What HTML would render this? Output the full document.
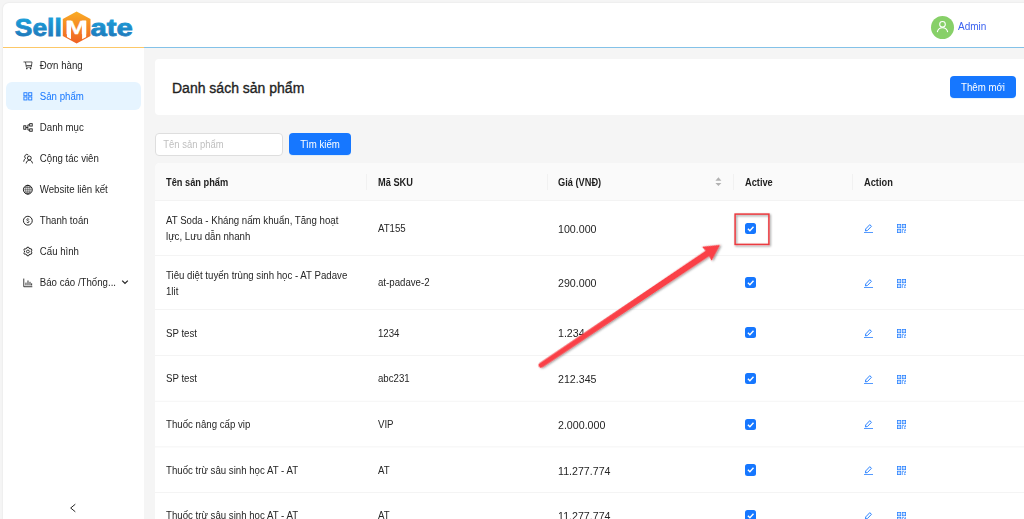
<!DOCTYPE html>
<html lang="vi">
<head>
<meta charset="utf-8">
<title>SellMate - Danh sách sản phẩm</title>
<style>
*{box-sizing:border-box;margin:0;padding:0}
html,body{width:1024px;height:519px;overflow:hidden;background:#f5f5f5;font-family:"Liberation Sans",sans-serif;font-size:9.67px;color:#262626}
.abs{position:absolute}
#page{position:absolute;left:3px;top:3px;width:1030px;height:530px;background:#f5f5f5;border-top-left-radius:6px;overflow:hidden;box-shadow:0 0 2px rgba(0,0,0,.10)}
#header{position:absolute;left:0;top:0;width:1030px;height:44px;background:#fff}
#hl1{position:absolute;left:0;top:43.6px;width:141px;height:1.2px;background:#fcc868}
#hl2{position:absolute;left:141px;top:43.6px;width:900px;height:1.2px;background:#84c2e8}
#sider{position:absolute;left:0;top:45px;width:141px;height:480px;background:#fff}
.mi{position:absolute;left:3px;width:135px;height:28px;border-radius:6px;line-height:28px;white-space:nowrap}
.mi span{position:absolute;left:33.800px;top:0}
.mi svg{position:absolute;left:16.500px;top:9.500px;width:9.600px;height:9.600px;overflow:visible}
.mi.sel{background:#e6f4ff;color:#1677ff}
#avatar{position:absolute;left:928px;top:12.600px;width:23px;height:23px;border-radius:50%;background:#87d068}
#admin{position:absolute;left:955px;top:17.800px;line-height:12px;color:#3b62f0;font-size:10px}
#titlecard{position:absolute;left:152px;top:56px;width:900px;height:56px;background:#fff;border-radius:4px}
#title{position:absolute;left:17px;top:20px;font-size:14px;line-height:18px;color:#1f1f1f;-webkit-text-stroke:.35px #1f1f1f;white-space:nowrap}
.btn{position:absolute;background:#1677ff;color:#fff;border-radius:4px;text-align:center;white-space:nowrap;box-shadow:0 1px 0 rgba(5,145,255,.1)}
#add{left:795px;top:16.800px;width:66px;height:22.300px;line-height:23.800px}
#search{left:286px;top:130.200px;width:62px;height:22.300px;line-height:23.800px}
#input{position:absolute;left:152px;top:130px;width:128px;height:22.5px;border:1px solid #dedede;border-radius:4px;background:#fff;color:#bfbfbf;line-height:22px;padding-left:7.300px;font-size:9.450px;white-space:nowrap}
#table{position:absolute;left:152px;top:160px;width:900px;height:400px;background:#fff;border-top-left-radius:5px;overflow:hidden}
#thead{position:absolute;left:0;top:0;width:900px;height:38px;background:#fafafa;border-bottom:1px solid #f3f3f3}
.th{position:absolute;top:.8px;height:38.5px;line-height:38.5px;font-weight:bold;font-size:9.25px;color:#1f1f1f;white-space:nowrap}
.sep{position:absolute;top:11px;width:1px;height:16px;background:#f1f1f1}
.row{position:absolute;left:0;width:900px}
.ln{position:absolute;left:0;width:900px;height:1px}
.c{position:absolute;white-space:nowrap;line-height:15.5px}
.c1{left:11px}.c2{left:223px}.c3{left:403px;font-size:10.65px}
.cb{position:absolute;left:590px;width:11.3px;height:11.3px;border-radius:2.5px;background:#1677ff}
.cb svg{position:absolute;left:0;top:0;width:11.3px;height:11.3px}
.ic{position:absolute;width:9px;height:9px}
.mi span,.c,.th,#admin,.btn span,#input span{transform:scaleY(1.08);transform-origin:50% 72%}
.btn span,#input span{display:inline-block}
</style>
</head>
<body>
<div id="page">
  <div id="header">
    <svg class="abs" style="left:0;top:0" width="150" height="44" viewBox="3 3 150 44">
      <defs>
        <linearGradient id="gb" x1="0" y1="14" x2="0" y2="38" gradientUnits="userSpaceOnUse"><stop offset="0" stop-color="#1ba7e0"/><stop offset="1" stop-color="#1e78ba"/></linearGradient>
        <linearGradient id="go" x1="0" y1="11" x2="0" y2="44" gradientUnits="userSpaceOnUse"><stop offset="0" stop-color="#faae25"/><stop offset="1" stop-color="#ef5f24"/></linearGradient>
        <clipPath id="hx"><polygon points="62.900,0 90.400,0 90.400,34.800 76.600,42.200 62.900,34.800"/></clipPath>
      </defs>
      <text x="14.800" y="35.800" font-family="Liberation Sans, sans-serif" font-weight="bold" font-size="24.600" fill="url(#gb)" stroke="url(#gb)" stroke-width=".8" textLength="47" lengthAdjust="spacingAndGlyphs">Sell</text>
      <polygon points="76.600,11.500 90.500,18.900 90.500,36.100 76.600,43.600 62.800,36.100 62.800,18.900" fill="url(#go)"/>
      <g clip-path="url(#hx)" fill="#fff"><text transform="translate(76.550 33.800) scale(1.400 1)" x="0" y="0" text-anchor="middle" font-family="Liberation Sans, sans-serif" font-weight="bold" font-size="19.200" stroke="#fff" stroke-width=".25">M</text><rect x="66.900" y="20.600" width="4.100" height="22"/><rect x="82.100" y="20.600" width="4.100" height="22"/></g>
      <text x="90.400" y="35.800" font-family="Liberation Sans, sans-serif" font-weight="bold" font-size="24.600" fill="url(#gb)" stroke="url(#gb)" stroke-width=".8" textLength="42.300" lengthAdjust="spacingAndGlyphs">ate</text>
    </svg>
    <div id="avatar">
      <svg class="abs" style="left:5px;top:4.500px" width="13" height="13" viewBox="0 0 12 12" fill="none" stroke="#fff" stroke-width="1"><circle cx="6" cy="4" r="2.6"/><path d="M1.2 11.2c.5-2.6 2.4-4 4.8-4s4.3 1.4 4.8 4"/></svg>
    </div>
    <div id="admin">Admin</div>
  </div>
  <div id="hl1"></div><div id="hl2"></div>

  <div id="sider">
    <div class="mi" style="top:3.00px"><svg viewBox="0 0 10 10" fill="none" stroke="#262626" stroke-width=".8"><path d="M.5 1h2.100l.9 5.400h5.100l.8-5.400H2.600M3.300 4.700h5.700"/><circle cx="4" cy="7.900" r=".85" fill="#262626" stroke="none"/><circle cx="7.900" cy="7.900" r=".85" fill="#262626" stroke="none"/></svg><span style="top:0.90px">Đơn hàng</span></div>
    <div class="mi sel" style="top:34.07px"><svg viewBox="0 0 10 10" fill="none" stroke="#1c79ff" stroke-width=".95"><rect x=".95" y=".75" width="3.200" height="3.150"/><rect x="5.950" y=".75" width="3.200" height="3.150"/><rect x=".95" y="5.150" width="3.200" height="3.150"/><rect x="5.950" y="5.150" width="3.200" height="3.150"/></svg><span style="top:0.83px">Sản phẩm</span></div>
    <div class="mi" style="top:65.14px"><svg viewBox="0 0 10 10" fill="none" stroke="#111" stroke-width=".9"><rect x=".8" y="2.900" width="2.200" height="3.600"/><rect x="7" y=".7" width="2.600" height="2.500"/><rect x="7" y="6.100" width="2.600" height="2.500"/><path d="M3 4.700h2.100M7 1.950H5.100v5.400H7"/></svg><span style="top:0.76px">Danh mục</span></div>
    <div class="mi" style="top:96.21px"><svg viewBox="0 0 10 10" fill="none" stroke="#111" stroke-width=".9"><circle cx="6.600" cy="4.200" r="2"/><path d="M3.300 9.800c.3-2.100 1.600-3.300 3.300-3.300s3 1.200 3.300 3.300M5.500 1A2.200 2.200 0 0 0 2.600 4.500C1.500 5.300.9 6.500.7 8"/></svg><span style="top:0.69px">Cộng tác viên</span></div>
    <div class="mi" style="top:127.28px"><svg viewBox="0 0 10 10" fill="none" stroke="#111" stroke-width="1"><circle cx="5.050" cy="4.900" r="4.600"/><g stroke-width=".6"><ellipse cx="5.050" cy="4.900" rx="2.200" ry="4.600"/><path d="M5.050.3v9.200"/></g><path d="M.5 4.900h9.100M1.300 2.600h7.500M1.300 7.200h7.500" stroke-width=".42"/></svg><span style="top:0.62px">Website liên kết</span></div>
    <div class="mi" style="top:158.35px"><svg viewBox="0 0 10 10" fill="none" stroke="#111" stroke-width=".95"><circle cx="5.050" cy="4.900" r="4.600"/><path d="M6.300 3.800c-.2-.5-.6-.8-1.250-.8-.75 0-1.250.35-1.250.9 0 .55.450.8 1.250 1 .85.2 1.300.5 1.300 1.050 0 .55-.55.950-1.300.950-.7 0-1.150-.3-1.350-.85M5.050 2.500v.5M5.050 6.900v.5" stroke-width=".7"/></svg><span style="top:0.55px">Thanh toán</span></div>
    <div class="mi" style="top:189.42px"><svg viewBox="0 0 10 10" fill="none" stroke="#111" stroke-width=".95" stroke-linejoin="round"><path d="M6.31 1.36 L6.04 0.30 L4.16 0.30 L3.89 1.36 L2.82 1.98 L1.76 1.69 L0.82 3.31 L1.60 4.08 L1.60 5.32 L0.82 6.09 L1.76 7.71 L2.82 7.42 L3.89 8.04 L4.16 9.10 L6.04 9.10 L6.31 8.04 L7.38 7.42 L8.44 7.71 L9.38 6.09 L8.60 5.32 L8.60 4.08 L9.38 3.31 L8.44 1.69 L7.38 1.98Z"/><circle cx="5.1" cy="4.7" r="1.500" stroke-width=".85"/></svg><span style="top:0.48px">Cấu hình</span></div>
    <div class="mi" style="top:220.49px"><svg viewBox="0 0 10 10" fill="none" stroke="#111" stroke-width=".85"><path d="M.8.6v8.500h8.900"/><path d="M3.100 7.800V4.800M5.200 7.800V2.600M7.300 7.800V4M9 7.800V5.600" stroke-width=".9"/></svg><span style="top:0.41px">Báo cáo /Thống...</span>
      <svg style="left:115px;top:10px;width:8px;height:8px" viewBox="0 0 8 8" fill="none" stroke="#262626" stroke-width="1.300"><path d="M1.200 2.600 4 5.400l2.800-2.800"/></svg></div>
    <svg class="abs" style="left:65px;top:455px" width="10" height="10" viewBox="0 0 10 10" fill="none" stroke="#262626" stroke-width="1"><path d="M7.300 1.200 2.700 5l4.600 3.800"/></svg>
  </div>

  <div id="titlecard">
    <div id="title">Danh sách sản phẩm</div>
    <div class="btn" id="add"><span>Thêm mới</span></div>
  </div>
  <div id="input"><span>Tên sản phẩm</span></div>
  <div class="btn" id="search"><span>Tìm kiếm</span></div>

  <div id="table">
    <div id="thead">
      <div class="th" style="left:11px">Tên sản phẩm</div>
      <div class="th" style="left:223px">Mã SKU</div>
      <div class="th" style="left:403px">Giá (VNĐ)</div>
      <div class="th" style="left:590px">Active</div>
      <div class="th" style="left:709px">Action</div>
      <div class="sep" style="left:211px"></div>
      <div class="sep" style="left:392px"></div>
      <div class="sep" style="left:578px"></div>
      <div class="sep" style="left:697px"></div>
      <svg class="abs" style="left:559px;top:13px" width="9" height="12" viewBox="0 0 9 12" fill="#b2b2b2"><path d="M4.400 1.200 7.400 4.700H1.400zM4.400 10.100 1.400 6.900h6z"/></svg>
    </div>
    <!-- rows inserted below -->
    <!--ROWS--><div id="rows">
    <div class="row" style="top:37.80px;height:54.60px"><div class="c c1" style="top:11.95px">AT Soda - Kháng nấm khuẩn, Tăng hoạt</div><div class="c c1" style="top:27.95px">lực, Lưu dẫn nhanh</div><div class="c c2" style="top:19.95px">AT155</div><div class="c c3" style="top:21.30px">100.000</div><div class="cb" style="top:22.05px"><svg viewBox="0 0 11.300 11.300" fill="none" stroke="#fff" stroke-width="1.400"><path d="M2.900 5.700l2 2 3.600-3.900"/></svg></div><svg class="ic" style="left:709.200px;top:23.70px" viewBox="0 0 9 9" fill="none" stroke="#2a82ff" stroke-width=".85"><path d="M0 8.550h9"/><path d="M1.400 6.900l.35-2L5.800.650l1.650 1.650L3.400 6.550z" stroke-linejoin="round" stroke-width="1"/></svg><svg class="ic" style="left:741.900px;top:23.70px" viewBox="0 0 9 9" fill="none" stroke="#2a82ff" stroke-width=".8"><rect x=".4" y=".4" width="3.300" height="3.300"/><rect x="5.300" y=".4" width="3.300" height="3.300"/><rect x=".4" y="5.300" width="3.300" height="3.300"/><path d="M1.550 2.050h1M6.450 2.050h1M1.550 6.950h1" stroke-width="1"/><path d="M5.300 9V5.300h1.400l1 1.300h1V5M6.900 8.600h1.800M7.300 7.300h.8" stroke-width=".75"/></svg></div>
    <div class="row" style="top:92.40px;height:54.10px"><div class="c c1" style="top:12.35px">Tiêu diệt tuyến trùng sinh học - AT Padave</div><div class="c c1" style="top:28.35px">1lit</div><div class="c c2" style="top:19.35px">at-padave-2</div><div class="c c3" style="top:20.70px">290.000</div><div class="cb" style="top:21.80px"><svg viewBox="0 0 11.300 11.300" fill="none" stroke="#fff" stroke-width="1.400"><path d="M2.900 5.700l2 2 3.600-3.900"/></svg></div><svg class="ic" style="left:709.200px;top:23.45px" viewBox="0 0 9 9" fill="none" stroke="#2a82ff" stroke-width=".85"><path d="M0 8.550h9"/><path d="M1.400 6.900l.35-2L5.800.650l1.650 1.650L3.400 6.550z" stroke-linejoin="round" stroke-width="1"/></svg><svg class="ic" style="left:741.900px;top:23.45px" viewBox="0 0 9 9" fill="none" stroke="#2a82ff" stroke-width=".8"><rect x=".4" y=".4" width="3.300" height="3.300"/><rect x="5.300" y=".4" width="3.300" height="3.300"/><rect x=".4" y="5.300" width="3.300" height="3.300"/><path d="M1.550 2.050h1M6.450 2.050h1M1.550 6.950h1" stroke-width="1"/><path d="M5.300 9V5.300h1.400l1 1.300h1V5M6.900 8.600h1.800M7.300 7.300h.8" stroke-width=".75"/></svg></div>
    <div class="row" style="top:146.50px;height:45.90px"><div class="c c1" style="top:16.25px">SP test</div><div class="c c2" style="top:16.25px">1234</div><div class="c c3" style="top:16.60px">1.234</div><div class="cb" style="top:17.70px"><svg viewBox="0 0 11.300 11.300" fill="none" stroke="#fff" stroke-width="1.400"><path d="M2.900 5.700l2 2 3.600-3.900"/></svg></div><svg class="ic" style="left:709.200px;top:19.35px" viewBox="0 0 9 9" fill="none" stroke="#2a82ff" stroke-width=".85"><path d="M0 8.550h9"/><path d="M1.400 6.900l.35-2L5.800.650l1.650 1.650L3.400 6.550z" stroke-linejoin="round" stroke-width="1"/></svg><svg class="ic" style="left:741.900px;top:19.35px" viewBox="0 0 9 9" fill="none" stroke="#2a82ff" stroke-width=".8"><rect x=".4" y=".4" width="3.300" height="3.300"/><rect x="5.300" y=".4" width="3.300" height="3.300"/><rect x=".4" y="5.300" width="3.300" height="3.300"/><path d="M1.550 2.050h1M6.450 2.050h1M1.550 6.950h1" stroke-width="1"/><path d="M5.300 9V5.300h1.400l1 1.300h1V5M6.900 8.600h1.800M7.300 7.300h.8" stroke-width=".75"/></svg></div>
    <div class="row" style="top:192.40px;height:45.80px"><div class="c c1" style="top:15.35px">SP test</div><div class="c c2" style="top:15.35px">abc231</div><div class="c c3" style="top:16.70px">212.345</div><div class="cb" style="top:17.65px"><svg viewBox="0 0 11.300 11.300" fill="none" stroke="#fff" stroke-width="1.400"><path d="M2.900 5.700l2 2 3.600-3.900"/></svg></div><svg class="ic" style="left:709.200px;top:19.30px" viewBox="0 0 9 9" fill="none" stroke="#2a82ff" stroke-width=".85"><path d="M0 8.550h9"/><path d="M1.400 6.900l.35-2L5.800.650l1.650 1.650L3.400 6.550z" stroke-linejoin="round" stroke-width="1"/></svg><svg class="ic" style="left:741.900px;top:19.30px" viewBox="0 0 9 9" fill="none" stroke="#2a82ff" stroke-width=".8"><rect x=".4" y=".4" width="3.300" height="3.300"/><rect x="5.300" y=".4" width="3.300" height="3.300"/><rect x=".4" y="5.300" width="3.300" height="3.300"/><path d="M1.550 2.050h1M6.450 2.050h1M1.550 6.950h1" stroke-width="1"/><path d="M5.300 9V5.300h1.400l1 1.300h1V5M6.900 8.600h1.800M7.300 7.300h.8" stroke-width=".75"/></svg></div>
    <div class="row" style="top:238.20px;height:45.70px"><div class="c c1" style="top:15.55px">Thuốc nâng cấp vip</div><div class="c c2" style="top:15.55px">VIP</div><div class="c c3" style="top:16.90px">2.000.000</div><div class="cb" style="top:17.60px"><svg viewBox="0 0 11.300 11.300" fill="none" stroke="#fff" stroke-width="1.400"><path d="M2.900 5.700l2 2 3.600-3.900"/></svg></div><svg class="ic" style="left:709.200px;top:19.25px" viewBox="0 0 9 9" fill="none" stroke="#2a82ff" stroke-width=".85"><path d="M0 8.550h9"/><path d="M1.400 6.900l.35-2L5.800.650l1.650 1.650L3.400 6.550z" stroke-linejoin="round" stroke-width="1"/></svg><svg class="ic" style="left:741.900px;top:19.25px" viewBox="0 0 9 9" fill="none" stroke="#2a82ff" stroke-width=".8"><rect x=".4" y=".4" width="3.300" height="3.300"/><rect x="5.300" y=".4" width="3.300" height="3.300"/><rect x=".4" y="5.300" width="3.300" height="3.300"/><path d="M1.550 2.050h1M6.450 2.050h1M1.550 6.950h1" stroke-width="1"/><path d="M5.300 9V5.300h1.400l1 1.300h1V5M6.900 8.600h1.800M7.300 7.300h.8" stroke-width=".75"/></svg></div>
    <div class="row" style="top:283.90px;height:45.60px"><div class="c c1" style="top:15.85px">Thuốc trừ sâu sinh học AT - AT</div><div class="c c2" style="top:15.85px">AT</div><div class="c c3" style="top:17.20px">11.277.774</div><div class="cb" style="top:17.55px"><svg viewBox="0 0 11.300 11.300" fill="none" stroke="#fff" stroke-width="1.400"><path d="M2.900 5.700l2 2 3.600-3.900"/></svg></div><svg class="ic" style="left:709.200px;top:19.20px" viewBox="0 0 9 9" fill="none" stroke="#2a82ff" stroke-width=".85"><path d="M0 8.550h9"/><path d="M1.400 6.900l.35-2L5.800.650l1.650 1.650L3.400 6.550z" stroke-linejoin="round" stroke-width="1"/></svg><svg class="ic" style="left:741.900px;top:19.20px" viewBox="0 0 9 9" fill="none" stroke="#2a82ff" stroke-width=".8"><rect x=".4" y=".4" width="3.300" height="3.300"/><rect x="5.300" y=".4" width="3.300" height="3.300"/><rect x=".4" y="5.300" width="3.300" height="3.300"/><path d="M1.550 2.050h1M6.450 2.050h1M1.550 6.950h1" stroke-width="1"/><path d="M5.300 9V5.300h1.400l1 1.300h1V5M6.900 8.600h1.800M7.300 7.300h.8" stroke-width=".75"/></svg></div>
    <div class="row" style="top:329.50px;height:45.80px"><div class="c c1" style="top:15.25px">Thuốc trừ sâu sinh học AT - AT</div><div class="c c2" style="top:15.25px">AT</div><div class="c c3" style="top:16.60px">11.277.774</div><div class="cb" style="top:17.65px"><svg viewBox="0 0 11.300 11.300" fill="none" stroke="#fff" stroke-width="1.400"><path d="M2.900 5.700l2 2 3.600-3.900"/></svg></div><svg class="ic" style="left:709.200px;top:19.30px" viewBox="0 0 9 9" fill="none" stroke="#2a82ff" stroke-width=".85"><path d="M0 8.550h9"/><path d="M1.400 6.900l.35-2L5.800.650l1.650 1.650L3.400 6.550z" stroke-linejoin="round" stroke-width="1"/></svg><svg class="ic" style="left:741.900px;top:19.30px" viewBox="0 0 9 9" fill="none" stroke="#2a82ff" stroke-width=".8"><rect x=".4" y=".4" width="3.300" height="3.300"/><rect x="5.300" y=".4" width="3.300" height="3.300"/><rect x=".4" y="5.300" width="3.300" height="3.300"/><path d="M1.550 2.050h1M6.450 2.050h1M1.550 6.950h1" stroke-width="1"/><path d="M5.300 9V5.300h1.400l1 1.300h1V5M6.900 8.600h1.800M7.300 7.300h.8" stroke-width=".75"/></svg></div>
    <div class="ln" style="top:92px;background:rgba(0,0,0,0.0415)"></div><div class="ln" style="top:146px;background:rgba(0,0,0,0.0415)"></div><div class="ln" style="top:192px;background:rgba(0,0,0,0.0415)"></div><div class="ln" style="top:237px;background:rgba(0,0,0,0.0090)"></div><div class="ln" style="top:238px;background:rgba(0,0,0,0.0325)"></div><div class="ln" style="top:283px;background:rgba(0,0,0,0.0266)"></div><div class="ln" style="top:284px;background:rgba(0,0,0,0.0149)"></div><div class="ln" style="top:329px;background:rgba(0,0,0,0.0415)"></div>
    </div><!--/ROWS-->
  </div>
</div>
<svg id="ann" class="abs" style="left:0;top:0;z-index:10" width="1024" height="519" viewBox="0 0 1024 519">
  <defs><filter id="sh" x="-10%" y="-10%" width="130%" height="130%"><feDropShadow dx="1" dy="1.200" stdDeviation="1.100" flood-color="#000" flood-opacity=".45"/></filter></defs>
  <rect x="735.100" y="214.100" width="33.800" height="30.300" fill="none" stroke="#ec3a3f" stroke-width="1.500" filter="url(#sh)"/>
  <g transform="translate(541 365.200) rotate(-33.900)" filter="url(#sh)">
    <path d="M0 -2.500 L200.500 -3.300 L199.700 -8.500 L215.700 0 L199.700 8.500 L200.500 3.300 L0 2.500 A2.500 2.500 0 0 1 0 -2.500Z" fill="#fa4047"/>
  </g>
</svg>
</body>
</html>
